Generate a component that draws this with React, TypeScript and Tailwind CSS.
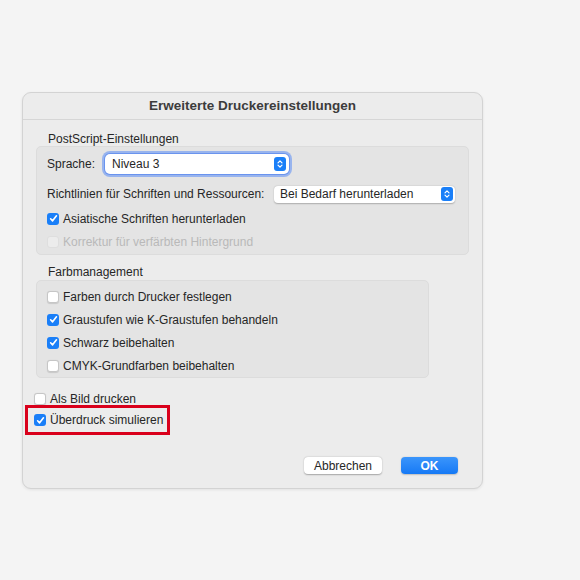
import React from "react";

const Check = ({ checked, disabled }: { checked?: boolean; disabled?: boolean }) =>
  checked ? (
    <span className="flex h-[12px] w-[12px] shrink-0 items-center justify-center rounded-[3px] bg-[#1a7ff8]">
      <svg width="9" height="9" viewBox="0 0 10 10">
        <path d="M1.8 5.3 L4 7.6 L8.3 2" fill="none" stroke="white" strokeWidth="1.8" strokeLinecap="round" strokeLinejoin="round" />
      </svg>
    </span>
  ) : (
    <span
      className={
        disabled
          ? "h-[12px] w-[12px] shrink-0 rounded-[3px] border border-[#dedede] bg-[#ececec]"
          : "h-[12px] w-[12px] shrink-0 rounded-[3px] border border-[#c6c6c6] bg-white shadow-[0_0.5px_1px_rgba(0,0,0,0.12)]"
      }
    />
  );

const Row = ({ label, checked, disabled }: { label: string; checked?: boolean; disabled?: boolean }) => (
  <div className="flex h-[23px] items-center gap-[4px]">
    <Check checked={checked} disabled={disabled} />
    <span className={disabled ? "text-[#b9b9b9]" : "text-[#262626]"}>{label}</span>
  </div>
);

const Stepper = () => (
  <span className="flex h-[14px] w-[12px] items-center justify-center rounded-[3px] bg-[#1a7ff8]">
    <svg width="8" height="10" viewBox="0 0 8 10">
      <path d="M2 3.8 L4 1.8 L6 3.8 M2 6.2 L4 8.2 L6 6.2" fill="none" stroke="white" strokeWidth="1.2" strokeLinecap="round" strokeLinejoin="round" />
    </svg>
  </span>
);

export default function App() {
  return (
    <div
      className="min-h-[580px] w-[580px] bg-[#f4f4f4] pl-[22px] pt-[92px] text-[12px] text-[#262626]"
      style={{ fontFamily: '"Liberation Sans", Arial, sans-serif' }}
    >
      <div className="flex h-[397px] w-[461px] flex-col rounded-[9px] border border-[#d3d3d3] bg-[#ececec] shadow-[0_1px_3px_rgba(0,0,0,0.08)]">
        <div className="flex h-[27px] items-center justify-center border-b border-[#d6d6d6] text-[13.5px] font-bold text-[#3c3c3c]">
          Erweiterte Druckereinstellungen
        </div>
        <div className="flex flex-col px-[13px] pt-[13px]">
          <div className="pl-[12px] leading-[12px]">PostScript-Einstellungen</div>
          <div className="mt-[1px] flex flex-col rounded-[5px] border border-[#dcdcdc] bg-[#e4e4e4] pl-[10px] pr-[11px] pt-[5px]">
            <div className="flex h-[23px] items-center">
              <span className="w-[58px]">Sprache:</span>
              <div className="flex h-[20px] w-[184px] items-center justify-between rounded-[5px] bg-white pl-[7px] pr-[3px] shadow-[0_0_0_3px_rgba(90,140,245,0.55),0_0_0_1px_rgba(60,110,230,0.6)]">
                <span>Niveau 3</span>
                <Stepper />
              </div>
            </div>
            <div className="mt-[9px] flex h-[20px] items-center">
              <span className="w-[227px]">Richtlinien für Schriften und Ressourcen:</span>
              <div className="flex h-[17px] w-[181px] items-center justify-between rounded-[4px] bg-white pl-[6px] pr-[2px] shadow-[0_0.5px_1.5px_rgba(0,0,0,0.25)]">
                <span>Bei Bedarf herunterladen</span>
                <Stepper />
              </div>
            </div>
            <div className="mt-[3px] pb-[1px]">
              <Row label="Asiatische Schriften herunterladen" checked />
              <Row label="Korrektur für verfärbten Hintergrund" disabled />
            </div>
          </div>
          <div className="mt-[10px] pl-[12px] leading-[15px]">Farbmanagement</div>
          <div className="flex w-[393px] flex-col rounded-[5px] border border-[#dcdcdc] bg-[#e4e4e4] px-[10px] pt-[4px]">
            <Row label="Farben durch Drucker festlegen" />
            <Row label="Graustufen wie K-Graustufen behandeln" checked />
            <Row label="Schwarz beibehalten" checked />
            <Row label="CMYK-Grundfarben beibehalten" />
          </div>
          <div className="mt-[9px] flex flex-col">
            <div className="-ml-[2px]">
              <Row label="Als Bild drucken" />
            </div>
            <div className="-ml-[11px] -mt-[5px] w-[145px] border-[3px] border-[#d9001b] pl-[6px]">
              <div className="flex h-[24px] items-center gap-[4px]">
                <Check checked />
                <span>Überdruck simulieren</span>
              </div>
            </div>
          </div>
          <div className="mt-[22px] flex justify-end gap-[19px] pr-[11px]">
            <button className="flex h-[17px] w-[78px] items-center justify-center rounded-[4px] bg-white text-[12px] text-[#262626] shadow-[0_0.5px_1.5px_rgba(0,0,0,0.3)]">
              Abbrechen
            </button>
            <button className="flex h-[17px] w-[57px] items-center justify-center rounded-[4px] bg-gradient-to-b from-[#3a95fb] to-[#1479f5] text-[12px] font-bold text-white shadow-[0_0.5px_1.5px_rgba(0,0,0,0.2)]">
              OK
            </button>
          </div>
        </div>
      </div>
    </div>
  );
}
